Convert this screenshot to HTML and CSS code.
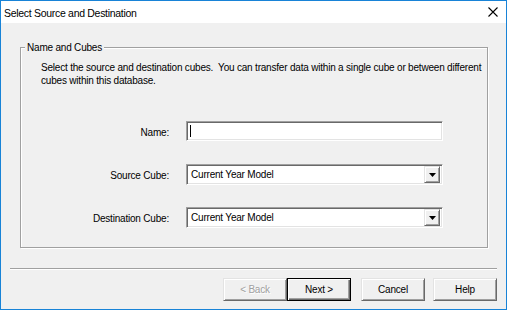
FILE: index.html
```html
<!DOCTYPE html>
<html lang="en">
<head>
<meta charset="utf-8">
<title>Select Source and Destination</title>
<link rel="stylesheet" href="styles.css">
</head>
<body>
<div class="window">
  <div class="titlebar">
    <span class="title">Select Source and Destination</span>
    <span class="close" aria-label="Close">
      <svg width="10" height="10" viewBox="0 0 10 10"><path d="M0.5 0.5L9.5 9.5M9.5 0.5L0.5 9.5" stroke="#000" stroke-width="1.1" fill="none"/></svg>
    </span>
  </div>
  <div class="client">
    <fieldset class="group">
      <legend class="legend">Name and Cubes</legend>
      <div class="group-body">
        <p class="desc">Select the source and destination cubes.&nbsp; You can transfer data within a single cube or between different cubes within this database.</p>
        <div class="form">
          <label class="lbl">Name:</label>
          <div class="edit"><span class="caret"></span></div>
          <label class="lbl">Source Cube:</label>
          <div class="combo"><span class="combo-text">Current Year Model</span><span class="drop"><svg width="7" height="4" viewBox="0 0 7 4"><path d="M0 0H7L3.5 4Z" fill="#000"/></svg></span></div>
          <label class="lbl">Destination Cube:</label>
          <div class="combo"><span class="combo-text">Current Year Model</span><span class="drop"><svg width="7" height="4" viewBox="0 0 7 4"><path d="M0 0H7L3.5 4Z" fill="#000"/></svg></span></div>
        </div>
      </div>
    </fieldset>
    <div class="sep"></div>
    <div class="buttons">
      <button class="btn disabled">&lt; Back</button>
      <button class="btn default">Next &gt;</button>
      <button class="btn gap1">Cancel</button>
      <button class="btn gap2">Help</button>
    </div>
  </div>
</div>
</body>
</html>
```
FILE: styles.css
```css
* { box-sizing: border-box; }
html, body { margin: 0; padding: 0; }
body { width: 507px; height: 310px; overflow: hidden; background: #f0f0f0; }

.window {
  width: 507px;
  height: 310px;
  border: 1px solid #1883d7;
  display: flex;
  flex-direction: column;
  font-family: "Liberation Sans", Arial, sans-serif;
  font-size: 10px;
  letter-spacing: -0.2px;
  color: #000;
}

.titlebar {
  height: 22px;
  background: #fff;
  display: flex;
  align-items: center;
  justify-content: space-between;
  padding: 0 8px 0 3px;
}
.title {
  font-size: 10.5px;
  letter-spacing: -0.3px;
  padding-top: 1px;
}
.close { display: flex; width: 10px; height: 10px; }

.client {
  flex: 1;
  background: #f0f0f0;
  display: flex;
  flex-direction: column;
  padding-top: 18px;
}

.group {
  margin: 0 0 20px 19px;
  width: 468px;
  padding: 0;
  border: 1px solid #a0a0a0;
  box-shadow: inset 1px 1px #fff, 1px 1px #fff;
  min-inline-size: 0;
}
.legend {
  margin-left: 4px;
  padding: 0 2px;
  line-height: 13px;
  background: #f0f0f0;
}
.group-body {
  padding: 7px 0 19px 20px;
}
.desc {
  margin: 0;
  line-height: 13px;
  width: 445px;
}

.form {
  margin-top: 34px;
  display: grid;
  grid-template-columns: 128px 257px;
  grid-auto-rows: 21px;
  column-gap: 17px;
  row-gap: 22px;
  align-items: center;
}
.lbl { text-align: right; line-height: 13px; padding-top: 1px; }

.edit {
  height: 20px;
  align-self: start;
  background: #fff;
  border: 1px solid;
  border-color: #a0a0a0 #fff #fff #a0a0a0;
  box-shadow: inset 1px 1px #696969, inset -1px -1px #e3e3e3;
  padding: 3px 0 0 3px;
}
.caret { display: block; width: 1px; height: 12px; background: #000; }

.combo {
  height: 21px;
  background: #fff;
  border: 1px solid;
  border-color: #a0a0a0 #fff #fff #a0a0a0;
  box-shadow: inset 1px 1px #696969, inset -1px -1px #e3e3e3;
  padding: 2px 2px 2px 4px;
  display: flex;
  align-items: center;
  justify-content: space-between;
}
.combo-text { line-height: 13px; }
.drop {
  width: 16px;
  height: 17px;
  background: #f0f0f0;
  border: 1px solid;
  border-color: #e3e3e3 #696969 #696969 #e3e3e3;
  box-shadow: inset 1px 1px #fff, inset -1px -1px #a0a0a0;
  display: flex;
  align-items: center;
  justify-content: center;
  padding-top: 1px;
}
.drop svg { display: block; }

.sep {
  margin: 0 9px;
  height: 2px;
  border-top: 1px solid #a0a0a0;
  border-bottom: 1px solid #fff;
}

.buttons {
  display: flex;
  justify-content: flex-end;
  padding: 8px 9px 0 0;
}
.btn {
  width: 64px;
  height: 23px;
  margin: 0;
  padding: 0;
  font: inherit;
  letter-spacing: inherit;
  color: #000;
  background: #f0f0f0;
  border: 1px solid;
  border-color: #e3e3e3 #696969 #696969 #e3e3e3;
  box-shadow: inset 1px 1px #fff, inset -1px -1px #a0a0a0;
  border-radius: 0;
}
.btn.default {
  border-color: #000;
  box-shadow: inset 1px 1px #fff, inset -1px -1px #696969, inset -2px -2px #a0a0a0;
}
.btn.disabled { color: #a0a0a0; text-shadow: 1px 1px #fff; }
.btn.gap1 { margin-left: 10px; }
.btn.gap2 { margin-left: 8px; }
```
